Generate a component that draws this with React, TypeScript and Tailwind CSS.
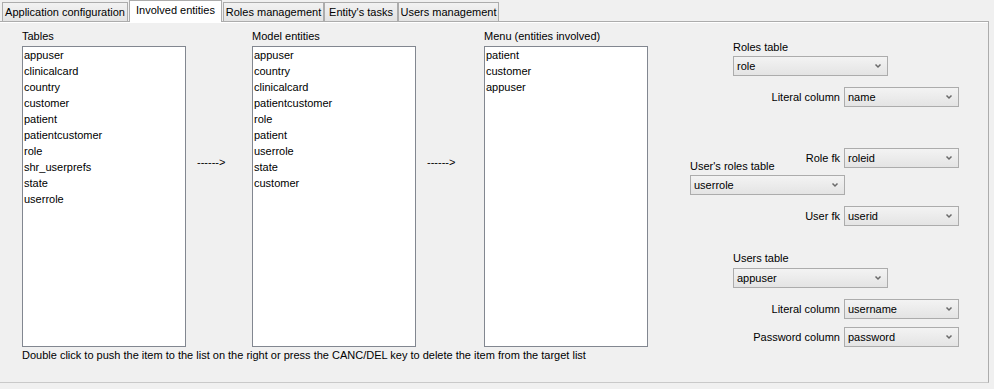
import { ReactNode } from "react";

const tables = ["appuser", "clinicalcard", "country", "customer", "patient", "patientcustomer", "role", "shr_userprefs", "state", "userrole"];
const modelEntities = ["appuser", "country", "clinicalcard", "patientcustomer", "role", "patient", "userrole", "state", "customer"];
const menuEntities = ["patient", "customer", "appuser"];

function Tab({ label, width, active }: { label: string; width: string; active?: boolean }) {
    if (active) {
        return (
            <div className={`relative z-10 -mb-px h-[22px] ${width} border border-b-0 border-[#acacac] bg-white text-center leading-[19px]`}>
                {label}
            </div>
        );
    }
    return (
        <div className={`h-[19px] ${width} border border-b-0 border-[#acacac] bg-gradient-to-b from-[#f2f2f2] to-[#e3e3e3] text-center leading-[19px]`}>
            {label}
        </div>
    );
}

function ListBox({ title, items }: { title: string; items: string[] }) {
    return (
        <div className="flex w-[164px] flex-col">
            <div className="h-[13px] leading-[13px]">{title}</div>
            <div className="mt-[3px] h-[301px] border border-[#828790] bg-white">
                {items.map(item => (
                    <div key={item} className="h-[16px] pl-px leading-[16px]">{item}</div>
                ))}
            </div>
        </div>
    );
}

function Arrow({ width }: { width: string }) {
    return (
        <div className={`${width} pl-[11px] pt-[125px] leading-[14px]`}>------&gt;</div>
    );
}

function Combo({ value, width }: { value: string; width: string }) {
    return (
        <div className={`flex h-[20px] ${width} items-center justify-between border border-[#acacac] bg-gradient-to-b from-[#f3f3f3] to-[#e4e4e4] pl-[3px] pr-[5px]`}>
            <span className="leading-[18px]">{value}</span>
            <svg width="8" height="6" viewBox="0 0 8 6">
                <path d="M1.5 1.5 L4 4 L6.5 1.5" fill="none" stroke="#6a6a6a" strokeWidth="1.5" />
            </svg>
        </div>
    );
}

function Field({ label, value, className }: { label: string; value: string; className?: string }) {
    return (
        <div className={`flex items-center justify-end gap-[4px] ${className ?? ""}`}>
            <span>{label}</span>
            <Combo value={value} width="w-[115px]" />
        </div>
    );
}

function Label({ children, className }: { children: ReactNode; className?: string }) {
    return <div className={`h-[13px] leading-[13px] ${className ?? ""}`}>{children}</div>;
}

export default function App() {
    return (
        <div className="h-[389px] w-[994px] overflow-hidden bg-[#f0f0f0] text-[11px] text-black [font-family:'Liberation_Sans',Arial,sans-serif]">
            {/* tab strip */}
            <div className="flex h-[21px] items-end pl-[2px]">
                <Tab label="Application configuration" width="w-[126px]" />
                <div className="ml-px">
                    <Tab label="Involved entities" width="w-[93px]" active />
                </div>
                <div className="ml-px">
                    <Tab label="Roles management" width="w-[101px]" />
                </div>
                <Tab label="Entity's tasks" width="w-[74px]" />
                <Tab label="Users management" width="w-[101px]" />
            </div>

            {/* tab page */}
            <div className="flex h-[362px] w-[989px] border-t border-r border-b border-t-[#acacac] border-r-[#acacac] border-b-[#c9c9c9] shadow-[inset_0_1px_0_#ffffff]">
                <div className="flex flex-col pl-[22px] pt-[8px]">
                    <div className="flex">
                        <ListBox title="Tables" items={tables} />
                        <Arrow width="w-[66px]" />
                        <ListBox title="Model entities" items={modelEntities} />
                        <Arrow width="w-[68px]" />
                        <ListBox title="Menu (entities involved)" items={menuEntities} />
                    </div>
                    <div className="mt-[2px] leading-[13px]">
                        Double click to push the item to the list on the right or press the CANC/DEL key to delete the item from the target list
                    </div>
                </div>

                <div className="ml-[42px] flex w-[269px] flex-col pt-[19px]">
                    <Label className="ml-[43px]">Roles table</Label>
                    <div className="ml-[43px] mt-[2px]">
                        <Combo value="role" width="w-[155px]" />
                    </div>
                    <Field label="Literal column" value="name" className="mt-[11px]" />

                    <div className="mt-[41px] flex items-start justify-between">
                        <Label className="mt-[12px]">User's roles table</Label>
                        <Field label="Role fk" value="roleid" />
                    </div>
                    <div className="mt-[2px]">
                        <Combo value="userrole" width="w-[155px]" />
                    </div>
                    <Field label="User fk" value="userid" className="mt-[11px]" />

                    <Label className="ml-[43px] mt-[26px]">Users table</Label>
                    <div className="ml-[43px] mt-[3px]">
                        <Combo value="appuser" width="w-[155px]" />
                    </div>
                    <Field label="Literal column" value="username" className="mt-[11px]" />
                    <Field label="Password column" value="password" className="mt-[8px]" />
                </div>
            </div>
        </div>
    );
}
